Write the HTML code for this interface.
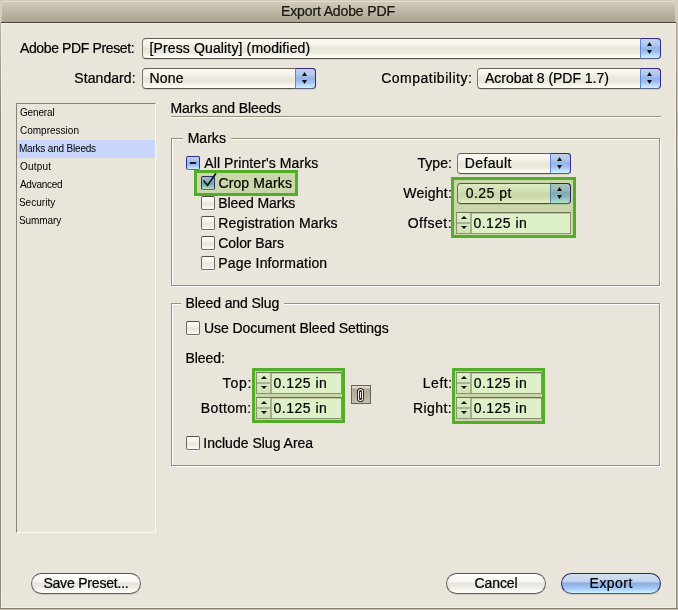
<!DOCTYPE html>
<html><head><meta charset="utf-8">
<style>
*{box-sizing:border-box;margin:0;padding:0}
html,body{width:678px;height:610px;overflow:hidden}
body{background:#d9d3c3;position:relative;font-family:"Liberation Sans",sans-serif;font-size:13px;color:#000}
.a{position:absolute}
.t{position:absolute;white-space:nowrap;color:#000;-webkit-text-stroke:0.22px #000}
#win{left:0;top:0;width:678px;height:609px;background:#e9e5da;overflow:hidden}
#title{left:1px;top:1px;width:675px;height:22px;background:linear-gradient(#e4dfce 0px,#e4dfce 1px,#d0cab8 1px,#cbc4b2 4px,#aaa391 21px);border-bottom:1px solid #48443a;border-radius:4px 4px 0 0;box-shadow:inset 1px 0 0 rgba(255,255,255,.35),inset -1px 0 0 rgba(255,255,255,.3)}
.pop{position:absolute;height:21px;border:1px solid #7c786e;border-top-color:#635f55;border-bottom-color:#58544a;border-radius:4px;background:linear-gradient(#fbfaf5 0%,#f6f4ec 25%,#e9e6da 50%,#ebe8dd 70%,#faf9f3 90%,#fdfcf8 100%);box-shadow:0 1px 0 rgba(120,115,100,.18)}
.pop .arr{position:absolute;right:-1px;top:-1px;bottom:-1px;width:21px;border:1px solid #3a2888;border-left:1px solid #5d86d6;border-bottom-color:#5a6488;border-radius:0 4px 4px 0;background:linear-gradient(#c2d2ea 0%,#b2c8ec 30%,#95b4e6 48%,#a2c2f2 70%,#bde2ff 88%,#cdf2ff 100%)}
.pop .arr svg{position:absolute;left:-1px;top:-1px}
.hl{position:absolute;height:2px;border-top:1px solid #958f80;border-bottom:1px solid #fff}
.grp{position:absolute;border:1px solid #958f80;box-shadow:inset 1px 1px 0 #fff,1px 1px 0 #fff}
.gap{position:absolute;height:3px;background:#e9e5da}
.cb{position:absolute;width:14px;height:14px;border:1px solid #6e6a5f;border-top-color:#4f4b41;border-radius:2px;background:linear-gradient(#ffffff 0%,#f7f5ee 30%,#e9e6dc 55%,#f2f0e8 80%,#ffffff 100%);box-shadow:0 1px 0 rgba(255,255,255,.5)}
.cb.blue{border-color:#35308a;border-bottom-color:#5a6fa0;background:linear-gradient(#b9cdee 0%,#a6c0ec 35%,#88ace6 50%,#a4c8f4 75%,#cdf0ff 100%)}
#side{left:16px;top:103px;width:140px;height:430px;border:1px solid #8a8476;border-right-color:#fbfaf4;border-bottom-color:#fbfaf4}
.btn{position:absolute;height:21px;border:1px solid #6a665e;border-top-color:#57534b;border-bottom-color:#625e56;border-radius:11px;background:linear-gradient(#fdfdfb 0%,#f7f6f2 40%,#e6e4dc 48%,#ebe9e2 65%,#f8f8f4 88%,#fdfdfb 100%);box-shadow:0 1px 0 rgba(90,85,75,.18)}
.btn.def{border-color:#2a2470;border-bottom-color:#5c5a6c;background:linear-gradient(#d4e1f3 0%,#c2d3ec 40%,#8aaee2 48%,#93b8ea 62%,#b4d9fa 85%,#cff3ff 100%)}
.hi{position:absolute;border:3px solid #52ae28}
.tint{position:absolute;background:#def0c7;mix-blend-mode:multiply}
.fld{position:absolute;height:22px;border:1px solid #a09c91;border-top-color:#7c786e;background:#fff;box-shadow:inset 0 1px 0 #d8d5cc}
.spin{position:absolute;left:0;top:0;width:15px;height:20px;border-right:2px solid #bdb9ae;background:linear-gradient(#fdfdfb,#f0eee8)}
.spin svg{position:absolute;left:0;top:0}
</style></head><body>
<div id="win" class="a">
<div class="a" style="left:0;top:0;width:678px;height:1px;background:#d2cbba"></div><div class="a" style="left:0;top:0;width:678px;height:23px;background:#d2cbba"></div><div id="title" class="a"></div>
<div class="a" style="left:1px;top:23px;width:675px;height:1px;background:#f3efe3"></div>
</div>
<div class="a" style="left:0;top:23px;width:1px;height:586px;background:linear-gradient(#b9b3a2,#8c8474 100px,#928a7a)"></div>
<div class="a" style="left:1px;top:23px;width:1px;height:584px;background:#f2efe4"></div>
<div class="a" style="left:676px;top:0;width:1px;height:610px;background:linear-gradient(#d2cbba 0px,#d2cbba 22px,#a8a190 23px,#8e887a 120px,#8e887a)"></div><div class="a" style="left:677px;top:0;width:1px;height:610px;background:linear-gradient(#d2cbba,#bab4a2 40%)"></div>
<div class="a" style="left:675px;top:23px;width:1px;height:584px;background:#f2efe4"></div>
<div class="a" style="left:1px;top:607px;width:675px;height:1px;background:#f2efe4"></div>
<div class="a" style="left:0;top:608px;width:678px;height:1px;background:#8a8474"></div>
<div class="a" style="left:0;top:609px;width:678px;height:1px;background:#bdb6a4"></div>

<div class="pop" style="left:142px;top:38px;width:519px"><div class="arr"><svg width="21" height="21"><polygon points="7,8 12,8 9.5,4" fill="#111"/><polygon points="7,12 12,12 9.5,16" fill="#111"/></svg></div></div>
<div class="pop" style="left:142px;top:68px;width:174px"><div class="arr"><svg width="21" height="21"><polygon points="7,8 12,8 9.5,4" fill="#111"/><polygon points="7,12 12,12 9.5,16" fill="#111"/></svg></div></div>
<div class="pop" style="left:477px;top:68px;width:184px"><div class="arr"><svg width="21" height="21"><polygon points="7,8 12,8 9.5,4" fill="#111"/><polygon points="7,12 12,12 9.5,16" fill="#111"/></svg></div></div>

<div id="side" class="a">
  <div class="a" style="left:0;top:36px;width:138px;height:18px;background:#c8d5fd"></div>
</div>

<div class="hl" style="left:171px;top:116px;width:490px"></div>
<div class="grp" style="left:171px;top:138px;width:489px;height:148px"></div>
<div class="gap" style="left:183px;top:137px;width:48px"></div>
<div class="cb blue" style="left:186px;top:156px"><div class="a" style="left:3px;top:5px;width:6px;height:2px;background:#1c1a30"></div></div>
<div class="cb blue" style="left:201px;top:176px"></div>
<svg class="a" style="left:200px;top:170px" width="20" height="20"><path d="M4,11 L7.5,15.5 L15.5,4" stroke="#1a2630" stroke-width="1.9" fill="none" stroke-linecap="round" stroke-linejoin="round"/></svg>
<div class="cb" style="left:201px;top:196px"></div>
<div class="cb" style="left:201px;top:216px"></div>
<div class="cb" style="left:201px;top:236px"></div>
<div class="cb" style="left:201px;top:256px"></div>

<div class="pop" style="left:457px;top:153px;width:114px"><div class="arr"><svg width="21" height="21"><polygon points="7,8 12,8 9.5,4" fill="#111"/><polygon points="7,12 12,12 9.5,16" fill="#111"/></svg></div></div>
<div class="pop" style="left:457px;top:183px;width:114px"><div class="arr"><svg width="21" height="21"><polygon points="7,8 12,8 9.5,4" fill="#111"/><polygon points="7,12 12,12 9.5,16" fill="#111"/></svg></div></div>
<div class="fld" style="left:456px;top:212px;width:115px"><div class="spin"><svg width="15" height="20"><polygon points="4,6 10,6 7,3" fill="#111"/><rect x="0" y="9" width="15" height="2" fill="#c4c0b4"/><polygon points="4,13 10,13 7,16" fill="#111"/></svg></div></div>

<div class="grp" style="left:171px;top:303px;width:489px;height:163px"></div>
<div class="gap" style="left:181px;top:302px;width:103px"></div>
<div class="cb" style="left:186px;top:321px"></div>
<div class="fld" style="left:256px;top:372px;width:86px"><div class="spin"><svg width="15" height="20"><polygon points="4,6 10,6 7,3" fill="#111"/><rect x="0" y="9" width="15" height="2" fill="#c4c0b4"/><polygon points="4,13 10,13 7,16" fill="#111"/></svg></div></div>
<div class="fld" style="left:256px;top:397px;width:86px"><div class="spin"><svg width="15" height="20"><polygon points="4,6 10,6 7,3" fill="#111"/><rect x="0" y="9" width="15" height="2" fill="#c4c0b4"/><polygon points="4,13 10,13 7,16" fill="#111"/></svg></div></div>
<div class="a" style="left:351px;top:385px;width:20px;height:19px;border:1px solid #67635a;background:linear-gradient(#dedacd 0px,#d8d4c6 2px,#aea895 3px,#b6b09d 9px,#c6c1af 17px)">
<svg class="a" style="left:4px;top:1px" width="12" height="17"><rect x="1" y="1" width="7" height="14" rx="3.5" fill="#2b2a2c"/><rect x="2" y="2" width="5" height="12" rx="2.5" fill="#f6f4ea"/><rect x="3" y="3" width="3" height="10" rx="1.5" fill="#2b2a2c"/><rect x="4" y="5" width="1" height="6" fill="#f6f4ea"/></svg>
</div>
<div class="fld" style="left:456px;top:372px;width:86px"><div class="spin"><svg width="15" height="20"><polygon points="4,6 10,6 7,3" fill="#111"/><rect x="0" y="9" width="15" height="2" fill="#c4c0b4"/><polygon points="4,13 10,13 7,16" fill="#111"/></svg></div></div>
<div class="fld" style="left:456px;top:397px;width:86px"><div class="spin"><svg width="15" height="20"><polygon points="4,6 10,6 7,3" fill="#111"/><rect x="0" y="9" width="15" height="2" fill="#c4c0b4"/><polygon points="4,13 10,13 7,16" fill="#111"/></svg></div></div>
<div class="cb" style="left:186px;top:436px"></div>

<div class="btn" style="left:31px;top:573px;width:110px"></div>
<div class="btn" style="left:446px;top:573px;width:100px"></div>
<div class="btn def" style="left:561px;top:573px;width:100px"></div>

<div class="t" style="left:281.0px;top:4px;font-size:14.0px;line-height:15px;letter-spacing:-0.133px;color:#1e1a14">Export Adobe PDF</div>
<div class="t" style="left:20.0px;top:41px;font-size:14.0px;line-height:15px;letter-spacing:-0.375px;">Adobe PDF Preset:</div>
<div class="t" style="left:149.4px;top:41px;font-size:14.0px;line-height:15px;letter-spacing:0.144px;">[Press Quality] (modified)</div>
<div class="t" style="left:74.3px;top:71px;font-size:14.0px;line-height:15px;letter-spacing:0.075px;">Standard:</div>
<div class="t" style="left:149.4px;top:71px;font-size:14.0px;line-height:15px;letter-spacing:0.267px;">None</div>
<div class="t" style="left:381.2px;top:71px;font-size:14.0px;line-height:15px;letter-spacing:0.508px;">Compatibility:</div>
<div class="t" style="left:485.0px;top:71px;font-size:14.0px;line-height:15px;letter-spacing:-0.039px;">Acrobat 8 (PDF 1.7)</div>
<div class="t" style="left:170.5px;top:101px;font-size:14.0px;line-height:15px;letter-spacing:-0.100px;">Marks and Bleeds</div>
<div class="t" style="left:187.7px;top:131px;font-size:14.0px;line-height:15px;letter-spacing:0.025px;">Marks</div>
<div class="t" style="left:204.3px;top:156px;font-size:14.0px;line-height:15px;letter-spacing:0.089px;">All Printer&#x27;s Marks</div>
<div class="t" style="left:218.4px;top:176px;font-size:14.0px;line-height:15px;letter-spacing:0.133px;">Crop Marks</div>
<div class="t" style="left:218.3px;top:196px;font-size:14.0px;line-height:15px;letter-spacing:-0.080px;">Bleed Marks</div>
<div class="t" style="left:218.3px;top:216px;font-size:14.0px;line-height:15px;letter-spacing:0.153px;">Registration Marks</div>
<div class="t" style="left:218.3px;top:236px;font-size:14.0px;line-height:15px;letter-spacing:-0.056px;">Color Bars</div>
<div class="t" style="left:218.3px;top:256px;font-size:14.0px;line-height:15px;letter-spacing:0.147px;">Page Information</div>
<div class="t" style="left:417.6px;top:156px;font-size:14.0px;line-height:15px;letter-spacing:0.000px;">Type:</div>
<div class="t" style="left:464.7px;top:156px;font-size:14.0px;line-height:15px;letter-spacing:0.400px;">Default</div>
<div class="t" style="left:403.2px;top:186px;font-size:14.0px;line-height:15px;letter-spacing:0.233px;">Weight:</div>
<div class="t" style="left:465.7px;top:186px;font-size:14.0px;line-height:15px;letter-spacing:0.467px;">0.25 pt</div>
<div class="t" style="left:407.7px;top:216px;font-size:14.0px;line-height:15px;letter-spacing:0.483px;">Offset:</div>
<div class="t" style="left:473.4px;top:216px;font-size:14.0px;line-height:15px;letter-spacing:0.514px;">0.125 in</div>
<div class="t" style="left:185.5px;top:296px;font-size:14.0px;line-height:15px;letter-spacing:-0.092px;">Bleed and Slug</div>
<div class="t" style="left:204.0px;top:321px;font-size:14.0px;line-height:15px;letter-spacing:-0.077px;">Use Document Bleed Settings</div>
<div class="t" style="left:185.5px;top:351px;font-size:14.0px;line-height:15px;letter-spacing:-0.060px;">Bleed:</div>
<div class="t" style="left:222.6px;top:376px;font-size:14.0px;line-height:15px;letter-spacing:0.800px;">Top:</div>
<div class="t" style="left:200.8px;top:401px;font-size:14.0px;line-height:15px;letter-spacing:0.367px;">Bottom:</div>
<div class="t" style="left:273.5px;top:376px;font-size:14.0px;line-height:15px;letter-spacing:0.500px;">0.125 in</div>
<div class="t" style="left:273.5px;top:401px;font-size:14.0px;line-height:15px;letter-spacing:0.500px;">0.125 in</div>
<div class="t" style="left:422.7px;top:376px;font-size:14.0px;line-height:15px;letter-spacing:0.575px;">Left:</div>
<div class="t" style="left:413.0px;top:401px;font-size:14.0px;line-height:15px;letter-spacing:0.400px;">Right:</div>
<div class="t" style="left:473.7px;top:376px;font-size:14.0px;line-height:15px;letter-spacing:0.457px;">0.125 in</div>
<div class="t" style="left:473.7px;top:401px;font-size:14.0px;line-height:15px;letter-spacing:0.457px;">0.125 in</div>
<div class="t" style="left:203.3px;top:436px;font-size:14.0px;line-height:15px;letter-spacing:0.006px;">Include Slug Area</div>
<div class="t" style="left:43.4px;top:576px;font-size:14.0px;line-height:15px;letter-spacing:-0.200px;">Save Preset...</div>
<div class="t" style="left:474.6px;top:576px;font-size:14.0px;line-height:15px;letter-spacing:-0.120px;">Cancel</div>
<div class="t" style="left:589.6px;top:576px;font-size:14.0px;line-height:15px;letter-spacing:0.460px;">Export</div>
<div class="t" style="left:19.9px;top:107px;font-size:10px;line-height:11px;-webkit-text-stroke:0;letter-spacing:-0.133px;">General</div>
<div class="t" style="left:19.9px;top:125px;font-size:10px;line-height:11px;-webkit-text-stroke:0;letter-spacing:0.020px;">Compression</div>
<div class="t" style="left:18.9px;top:143px;font-size:10px;line-height:11px;-webkit-text-stroke:0;letter-spacing:-0.187px;">Marks and Bleeds</div>
<div class="t" style="left:19.9px;top:161px;font-size:10px;line-height:11px;-webkit-text-stroke:0;letter-spacing:0.220px;">Output</div>
<div class="t" style="left:19.9px;top:179px;font-size:10px;line-height:11px;-webkit-text-stroke:0;letter-spacing:-0.243px;">Advanced</div>
<div class="t" style="left:18.9px;top:197px;font-size:10px;line-height:11px;-webkit-text-stroke:0;letter-spacing:0.029px;">Security</div>
<div class="t" style="left:18.9px;top:215px;font-size:10px;line-height:11px;-webkit-text-stroke:0;letter-spacing:-0.050px;">Summary</div>

<div class="tint" style="left:197px;top:173px;width:98px;height:20px"></div>
<div class="hi" style="left:194px;top:170px;width:104px;height:26px"></div>
<div class="tint" style="left:454px;top:180px;width:119px;height:55px"></div>
<div class="hi" style="left:451px;top:177px;width:125px;height:61px"></div>
<div class="tint" style="left:255px;top:371px;width:87px;height:49px"></div>
<div class="hi" style="left:252px;top:368px;width:93px;height:55px"></div>
<div class="tint" style="left:455px;top:371px;width:87px;height:50px"></div>
<div class="hi" style="left:452px;top:368px;width:93px;height:56px"></div>
</body></html>
